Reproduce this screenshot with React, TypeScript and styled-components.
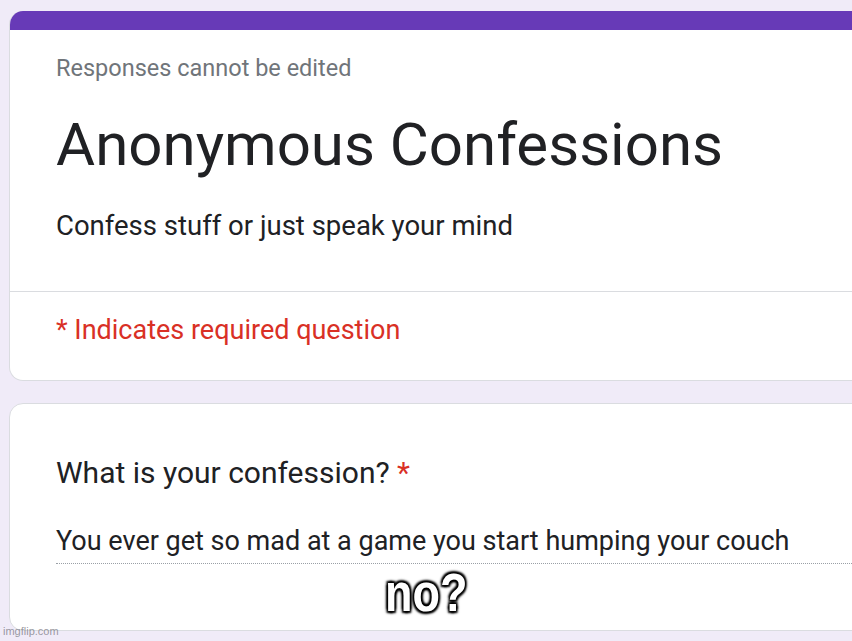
import styled, { createGlobalStyle } from "styled-components";

const GlobalStyle = createGlobalStyle`
  html, body {
    margin: 0;
    padding: 0;
    background: #f0ebf8;
    overflow: hidden;
  }
  body {
    font-family: Roboto, "Liberation Sans", Arial, sans-serif;
  }
`

const Page = styled.div`
  position: relative;
  width: 852px;
  height: 641px;
  overflow: hidden;
  padding: 11px 0 0 9px;
  box-sizing: border-box;
`

const Card = styled.div<{ $top?: boolean }>`
  width: 880px;
  background: #fff;
  border: 1px solid #dadce0;
  border-radius: 14px;
  box-sizing: border-box;
  overflow: hidden;
  margin-bottom: 22px;
  ${p => p.$top && `border-top: none;`}
`

const Banner = styled.div`
  height: 19px;
  background: #673ab7;
`

const Header = styled.div`
  padding: 27px 0 0 46px;
  display: flex;
  flex-direction: column;
`

const Line = styled.div<{ $size: number; $color: string; $gap: number }>`
  font-size: ${p => p.$size}px;
  line-height: 1;
  color: ${p => p.$color};
  margin-top: ${p => p.$gap}px;
  white-space: nowrap;
`

const Divider = styled.div`
  height: 1px;
  background: #dadce0;
  margin-top: 52px;
`

const Required = styled.div`
  padding: 25px 0 36px 46px;
  font-size: 27px;
  line-height: 1;
  color: #d93025;
`

const Question = styled.div`
  padding: 54px 0 66px 46px;
`

const Label = styled.div`
  font-size: 30px;
  line-height: 1;
  color: #202124;
  span {
    color: #d93025;
  }
`

const Answer = styled.div`
  margin-top: 39.5px;
  padding-bottom: 8.5px;
  font-size: 27px;
  line-height: 1;
  color: #202124;
  border-bottom: 1px dotted #9aa0a6;
  white-space: nowrap;
`

const Caption = styled.div`
  position: absolute;
  left: 385px;
  top: 573px;
  font-family: "Liberation Sans", Arial, sans-serif;
  font-weight: bold;
  font-size: 45px;
  line-height: 1;
  color: #fff;
  transform: scaleY(1.18);
  transform-origin: 50% 85%;
  text-shadow: 0 0 2px #000, 0 0 3px #000, 1.5px 1.5px 2px #000, -1.5px -1.5px 2px #000, 1.5px -1.5px 2px #000, -1.5px 1.5px 2px #000;
`

const Watermark = styled.div`
  position: absolute;
  left: 3px;
  top: 625px;
  font-family: "Liberation Sans", Arial, sans-serif;
  font-size: 11px;
  color: rgba(120, 120, 130, 0.75);
`

export default function App() {
  return (
    <>
      <GlobalStyle />
      <Page>
        <Card $top>
          <Banner />
          <Header>
            <Line $size={23.5} $color="#70757a" $gap={0}>Responses cannot be edited</Line>
            <Line $size={60} $color="#202124" $gap={34}>Anonymous Confessions</Line>
            <Line $size={27.5} $color="#202124" $gap={37}>Confess stuff or just speak your mind</Line>
          </Header>
          <Divider />
          <Required>* Indicates required question</Required>
        </Card>
        <Card>
          <Question>
            <Label>What is your confession? <span>*</span></Label>
            <Answer>You ever get so mad at a game you start humping your couch</Answer>
          </Question>
        </Card>
        <Caption>no?</Caption>
        <Watermark>imgflip.com</Watermark>
      </Page>
    </>
  );
}
